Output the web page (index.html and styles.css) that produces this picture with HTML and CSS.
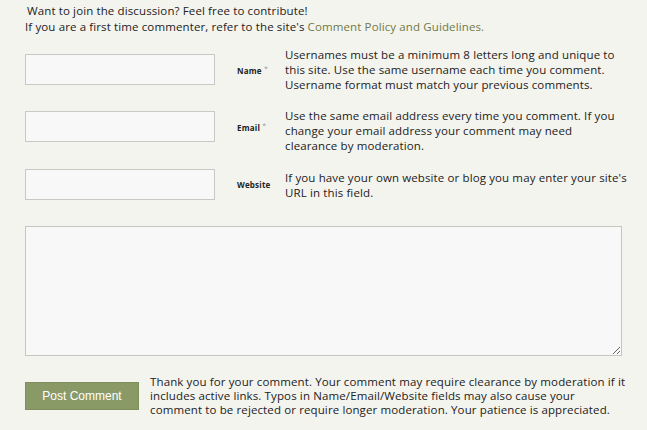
FILE: index.html
```html
<!DOCTYPE html>
<html>
<head>
<meta charset="utf-8">
<link rel="stylesheet" href="styles.css">
</head>
<body>
<div class="wrap">
  <p class="intro"><span class="lead">Want to join the discussion? Feel free to contribute!</span><br>If you are a first time commenter, refer to the site's <a href="#" class="link">Comment Policy and Guidelines.</a></p>
  <form class="form">
    <div class="row">
      <input class="field" type="text">
      <label class="label">Name <span class="req">*</span></label>
      <p class="desc">Usernames must be a minimum 8 letters long and unique to this site. Use the same username each time you comment. Username format must match your previous comments.</p>
    </div>
    <div class="row">
      <input class="field" type="text">
      <label class="label">Email <span class="req">*</span></label>
      <p class="desc desc-narrow">Use the same email address every time you comment. If you change your email address your comment may need clearance by moderation.</p>
    </div>
    <div class="row">
      <input class="field" type="text">
      <label class="label">Website</label>
      <p class="desc">If you have your own website or blog you may enter your site's URL in this field.</p>
    </div>
    <textarea class="message"></textarea>
    <div class="submit-row">
      <button type="button" class="btn">Post Comment</button>
      <p class="note">Thank you for your comment. Your comment may require clearance by moderation if it includes active links. Typos in Name/Email/Website fields may also cause your comment to be rejected or require longer moderation. Your patience is appreciated.</p>
    </div>
  </form>
</div>
</body>
</html>
```
FILE: styles.css
```css
html, body {
  margin: 0;
  padding: 0;
  background: #f4f4ef;
}
body {
  font-family: "Open Sans", "DejaVu Sans", sans-serif;
  font-size: 11.5px;
  letter-spacing: 0.12px;
  color: #222;
  width: 647px;
  height: 430px;
  overflow: hidden;
}
.wrap {
  padding: 3px 0 0 25px;
}
.intro {
  margin: 0;
  line-height: 16px;
}
.lead {
  padding-left: 2px;
}
.link {
  color: #6f7a45;
  text-decoration: none;
}
.form {
  margin-top: 19px;
}
.row {
  display: flex;
  align-items: center;
  height: 31px;
  margin-bottom: 26px;
}
.row:nth-child(2) { margin-bottom: 27px; }
.field {
  box-sizing: border-box;
  width: 190px;
  height: 31px;
  margin: 0;
  border: 1px solid #c9c9c4;
  background: #f8f8f8;
  flex: none;
}
.label {
  width: 48px;
  margin-left: 22px;
  font-size: 8px;
  letter-spacing: 0.2px;
  font-weight: bold;
  color: #222;
  flex: none;
}
.req {
  color: #999;
  font-size: 7px;
  vertical-align: 3px;
  font-weight: normal;
}
.desc {
  margin: 0;
  width: 345px;
  line-height: 15px;
}
.desc-narrow {
  width: 335px;
}
.row:nth-child(2) .desc { margin-top: 8px; }
.message {
  display: block;
  box-sizing: border-box;
  width: 597px;
  height: 130px;
  margin: 0;
  border: 1px solid #c6c6c1;
  background: #f8f8f8;
  resize: both;
}
.submit-row {
  display: flex;
  align-items: center;
  margin-top: 19px;
}
.btn {
  flex: none;
  width: 114px;
  height: 28px;
  border: 1px solid #7f8f5c;
  background: #8a9a67;
  color: #fff;
  font-family: "Liberation Sans", Arial, sans-serif;
  font-size: 12px;
  letter-spacing: 0;
  padding: 0;
}
.note {
  margin: 0 0 0 11px;
  width: 478px;
  line-height: 14px;
}
```
